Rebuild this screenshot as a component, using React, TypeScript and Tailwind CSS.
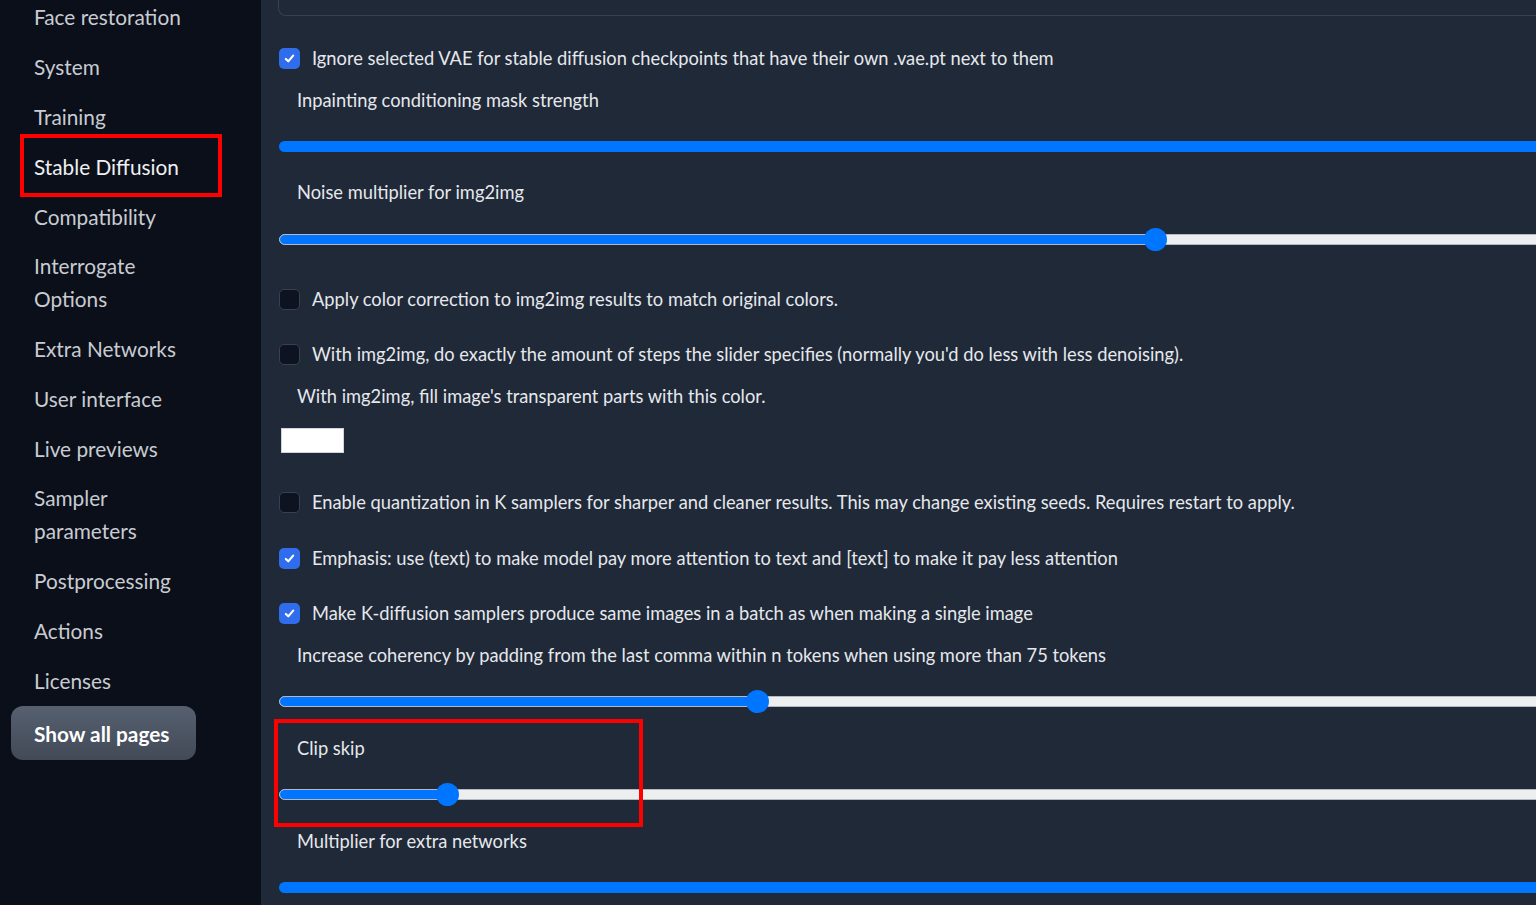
import React from 'react';

const sidebarItems = [
  'Face restoration',
  'System',
  'Training',
  'Stable Diffusion',
  'Compatibility',
  'Interrogate Options',
  'Extra Networks',
  'User interface',
  'Live previews',
  'Sampler parameters',
  'Postprocessing',
  'Actions',
  'Licenses',
];

const Check = ({ checked }: { checked: boolean }) =>
  checked ? (
    <span className="w-[21px] h-[21px] rounded-[5px] bg-[#2f6ded] flex items-center justify-center shrink-0">
      <svg viewBox="0 0 16 16" className="w-[13px] h-[13px]" fill="none" stroke="white" strokeWidth="2.6" strokeLinecap="round" strokeLinejoin="round">
        <path d="M3.5 8.5l3 3 6-7" />
      </svg>
    </span>
  ) : (
    <span className="w-[21px] h-[21px] rounded-[5px] bg-[#0e1322] border border-[#374151] shrink-0" />
  );

const CheckRow = ({ checked, label, mt }: { checked: boolean; label: string; mt: string }) => (
  <div className={`${mt} h-[32px] flex items-center gap-3 pl-[1px]`}>
    <Check checked={checked} />
    <span className="pt-[2px] text-[18.3px] text-[#e6e8ec] whitespace-nowrap">{label}</span>
  </div>
);

const Label = ({ text, mt }: { text: string; mt: string }) => (
  <div className={`${mt} h-[32px] flex items-center pt-[2px] pl-[19px] text-[18.3px] text-[#e6e8ec] whitespace-nowrap`}>{text}</div>
);

// pos = thumb x relative to track start, undefined = fully filled past the edge
const Track = ({ pos, mt }: { pos?: number; mt: string }) => (
  <div className={`${mt} h-[22px] relative flex items-center pl-[1px]`}>
    {pos === undefined ? (
      <div className="h-[11px] w-[1400px] rounded-full bg-[#0075ff]" />
    ) : (
      <div className="h-[11px] w-[1400px] rounded-full bg-[#eceef0] border border-[#b5b9bf] overflow-hidden">
        <div className="h-full bg-[#0075ff]" style={{ width: pos }} />
      </div>
    )}
    {pos !== undefined && (
      <div className="absolute top-0 w-[23px] h-[23px] -mt-[0.5px] rounded-full bg-[#0075ff]" style={{ left: pos - 10 }} />
    )}
  </div>
);

export default function App() {
  return (
    <div className="w-[1536px] h-[905px] overflow-hidden flex bg-[#1f2938]" style={{ fontFamily: 'Lato, "Noto Sans", sans-serif' }}>
      {/* sidebar */}
      <aside className="w-[261px] shrink-0 bg-[#0b0f19] px-[11px]">
        <ul className="-mt-[8px]">
          {sidebarItems.map((item) => (
            <li key={item} className="relative px-[23px] py-[8.4px] leading-[33px] text-[20.8px] text-[#c8ccd2] w-[200px]">
              <span className={item === 'Stable Diffusion' ? 'text-[#eef0f3]' : ''}>{item}</span>
              {item === 'Stable Diffusion' && (
                <div className="absolute left-[9px] right-[-11px] top-[-7px] bottom-[-6px] border-[4px] border-[#ff0000]" />
              )}
            </li>
          ))}
        </ul>
        <button className="mt-[1px] w-[185px] h-[54px] rounded-xl bg-gradient-to-b from-[#566070] to-[#424a57] text-left pl-[23px] text-[20.8px] font-bold text-white">
          Show all pages
        </button>
      </aside>

      {/* settings column */}
      <main className="flex-1 pl-[17px]">
        <div className="h-[16px] w-[1400px] border border-t-0 border-[#374151] rounded-b-lg" />
        <CheckRow checked mt="mt-[26px]" label="Ignore selected VAE for stable diffusion checkpoints that have their own .vae.pt next to them" />
        <Label mt="mt-[10px]" text="Inpainting conditioning mask strength" />
        <Track mt="mt-[19px]" />
        <Label mt="mt-[19px]" text="Noise multiplier for img2img" />
        <Track mt="mt-[20px]" pos={876} />
        <CheckRow checked={false} mt="mt-[33px]" label="Apply color correction to img2img results to match original colors." />
        <CheckRow checked={false} mt="mt-[23px]" label="With img2img, do exactly the amount of steps the slider specifies (normally you'd do less with less denoising)." />
        <Label mt="mt-[10px]" text="With img2img, fill image's transparent parts with this color." />
        <div className="mt-[16px] ml-[3px] w-[63px] h-[25px] bg-white border border-[#d1d5db]" />
        <CheckRow checked={false} mt="mt-[33px]" label="Enable quantization in K samplers for sharper and cleaner results. This may change existing seeds. Requires restart to apply." />
        <CheckRow checked mt="mt-[24px]" label="Emphasis: use (text) to make model pay more attention to text and [text] to make it pay less attention" />
        <CheckRow checked mt="mt-[23px]" label="Make K-diffusion samplers produce same images in a batch as when making a single image" />
        <Label mt="mt-[10px]" text="Increase coherency by padding from the last comma within n tokens when using more than 75 tokens" />
        <Track mt="mt-[19px]" pos={478} />
        <div className="relative pt-[20px]">
          <Label mt="mt-0" text="Clip skip" />
          <Track mt="mt-[19px]" pos={168} />
          <div className="absolute left-[-4px] top-[7px] w-[369px] h-[108px] border-[4px] border-[#ff0000]" />
        </div>
        <Label mt="mt-[20px]" text="Multiplier for extra networks" />
        <Track mt="mt-[19px]" />
      </main>
    </div>
  );
}
